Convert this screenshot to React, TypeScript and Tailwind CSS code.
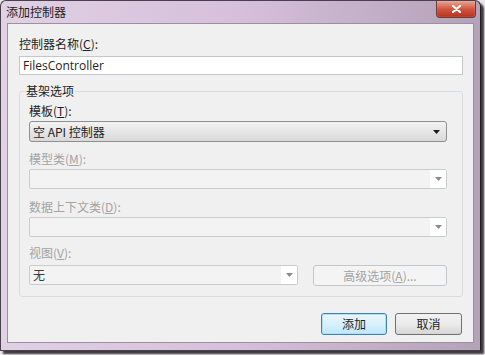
const cjk = "font-['Microsoft_YaHei','Noto_Sans_CJK_SC',sans-serif]";

function Arrow({ dim }: { dim?: boolean }) {
  return (
    <svg width="7" height="4" viewBox="0 0 7 4" aria-hidden>
      <path d="M0 0h7L3.5 4z" fill={dim ? '#8a8a8a' : '#1a1a1a'} />
    </svg>
  );
}

function DisabledCombo({ value, className }: { value?: string; className?: string }) {
  return (
    <div
      className={`flex h-[20px] items-stretch rounded-[2px] border border-[#c9cccf] bg-[#f3f3f3] ${className ?? ''}`}
    >
      <div className="flex flex-1 items-center pl-[3px] text-[12px] text-[#3a3a3a]">{value}</div>
      <div className="flex w-[16px] items-center justify-center bg-white">
        <Arrow dim />
      </div>
    </div>
  );
}

export default function App() {
  return (
    <div className={`h-[355px] w-[485px] bg-[#ece6ed] ${cjk}`}>
      <div className="flex h-[351px] w-[481px] flex-col rounded-t-[6px] border border-[#4a3f4e] border-r-[#202020] bg-gradient-to-r from-[#e0d1e3] via-[#d6bfdb] to-[#b3a2b8] shadow-[3px_3px_2px_rgba(0,0,0,0.75)]">
        {/* title bar */}
        <div className="flex h-[22px] shrink-0 items-start justify-between pl-[5px]">
          <span className="mt-[3px] text-[12px] leading-[16px] text-[#1c1c1c]">添加控制器</span>
          <div className="mr-[4px] flex h-[17px] w-[40px] items-center justify-center rounded-b-[4px] border border-t-0 border-[#6e3a32] bg-gradient-to-b from-[#e8a595] via-[#d2553f] to-[#b8321f] shadow-[inset_0_0_1px_rgba(255,255,255,0.7)]">
            <svg width="9" height="8" viewBox="0 0 9 8" aria-hidden>
              <path d="M1 1l7 6M8 1L1 7" stroke="#fff" strokeWidth="2.2" strokeLinecap="round" />
            </svg>
          </div>
        </div>

        {/* client area */}
        <div className="mx-[6px] mb-[7px] flex flex-1 flex-col border border-[#9c8fa2] bg-[#f0f0f0] pl-[11px] pr-[10px]">
          <div className="mt-[12px] text-[12px] leading-[16px] text-[#1e1e1e]">
            控制器名称(<span className="underline">C</span>):
          </div>
          <div className="mt-[4px] flex h-[19px] items-center border border-[#c3c6cb] bg-white pl-[3px] font-['Segoe_UI','Open_Sans',sans-serif] text-[12px] text-[#1e1e1e]">
            FilesController
          </div>

          {/* group box */}
          <div className="relative mt-[16px] h-[206px] rounded-[3px] border border-[#d9dde0] pl-[9px] pr-[15px]">
            <span className="absolute left-[5px] top-[-9px] bg-[#f0f0f0] px-[1px] text-[12px] leading-[16px] text-[#1e1e1e]">
              基架选项
            </span>
            <div className="mt-[11px] text-[12px] leading-[16px] text-[#1e1e1e]">
              模板(<span className="underline">T</span>):
            </div>
            <div className="mt-[2px] flex h-[21px] items-center justify-between rounded-[3px] border border-[#8e8f8f] bg-gradient-to-b from-[#f3f3f3] via-[#e6e6e6] to-[#d9d9d9] pl-[3px] pr-[6px] text-[12px] text-[#1e1e1e]">
              <span>空 API 控制器</span>
              <Arrow />
            </div>

            <div className="mt-[9px] text-[12px] leading-[16px] text-[#a3a3a3]">
              模型类(<span className="underline">M</span>):
            </div>
            <DisabledCombo className="mt-[2px]" />

            <div className="mt-[10px] text-[12px] leading-[16px] text-[#a3a3a3]">
              数据上下文类(<span className="underline">D</span>):
            </div>
            <DisabledCombo className="mt-[2px]" />

            <div className="mt-[8px] text-[12px] leading-[16px] text-[#a3a3a3]">
              视图(<span className="underline">V</span>):
            </div>
            <div className="mt-[4px] flex gap-[15px]">
              <DisabledCombo value="无" className="w-[269px]" />
              <div className="flex h-[21px] flex-1 items-center justify-center rounded-[3px] border border-[#c3c6c9] bg-[#f4f4f4] text-[12px] text-[#a3a3a3]">
                高级选项(<span className="underline">A</span>)...
              </div>
            </div>
          </div>

          {/* buttons */}
          <div className="mt-[16px] flex justify-end gap-[8px] pr-[1px]">
            <div className="flex h-[22px] w-[66px] items-center justify-center rounded-[3px] border border-[#3c7fb1] bg-gradient-to-b from-[#eaf6fd] via-[#d9f0fc] to-[#bee6fd] text-[12px] text-[#1e1e1e] shadow-[inset_0_0_0_1px_#aee3f7]">
              添加
            </div>
            <div className="flex h-[22px] w-[67px] items-center justify-center rounded-[3px] border border-[#707070] bg-gradient-to-b from-[#f2f2f2] via-[#ebebeb] to-[#d6d6d6] text-[12px] text-[#1e1e1e]">
              取消
            </div>
          </div>
        </div>
      </div>
    </div>
  );
}
